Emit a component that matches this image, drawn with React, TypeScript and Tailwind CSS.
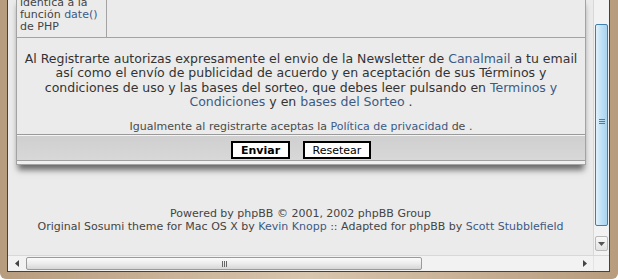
import React from "react";

// Fenêtre de navigateur (thème Sosumi phpBB), contenu défilé vers le bas
const font = { fontFamily: "Verdana, 'DejaVu Sans', sans-serif" };

function VScrollbar() {
    return (
        <div className="w-[16px] shrink-0 flex flex-col border-l border-[#d8d8d8] bg-[#f2f2f2]">
            <div className="h-[24px]" />
            {/* thumb */}
            <div className="mx-[1px] h-[202px] rounded-[2px] border border-[#3f7fae] bg-gradient-to-r from-[#e3f2fb] via-[#bfe0f5] to-[#a9d3ef] flex items-center justify-center">
                <div className="flex flex-col gap-[1px] mt-[-8px]">
                    <div className="w-[6px] h-[1px] bg-[#4a7da3]" />
                    <div className="w-[6px] h-[1px] bg-[#4a7da3]" />
                    <div className="w-[6px] h-[1px] bg-[#4a7da3]" />
                </div>
            </div>
            <div className="h-[10px]" />
            {/* down arrow */}
            <div className="mx-[1px] h-[15px] rounded-[2px] border border-[#b8b8b8] bg-gradient-to-b from-[#f8f8f8] to-[#e2e2e2] flex items-center justify-center">
                <svg width="7" height="4" viewBox="0 0 7 4">
                    <path d="M0 0h7L3.5 4z" fill="#555" />
                </svg>
            </div>
            <div className="flex-1" />
        </div>
    );
}

function HScrollbar() {
    return (
        <div className="h-[16px] shrink-0 flex border-t border-[#d8d8d8] bg-[#f2f2f2]">
            <div className="w-[18px] flex items-center justify-center">
                <svg width="4" height="7" viewBox="0 0 4 7">
                    <path d="M4 0v7L0 3.5z" fill="#444" />
                </svg>
            </div>
            <div className="w-[396px] my-[1px] rounded-[2px] border border-[#9a9a9a] bg-gradient-to-b from-[#fbfbfb] via-[#ececec] to-[#d6d6d6] flex items-center justify-center">
                <div className="flex gap-[1px]">
                    <div className="w-[1px] h-[6px] bg-[#666]" />
                    <div className="w-[1px] h-[6px] bg-[#666]" />
                    <div className="w-[1px] h-[6px] bg-[#666]" />
                </div>
            </div>
            <div className="flex-1 flex items-center justify-end pr-[6px]">
                <svg width="4" height="7" viewBox="0 0 4 7">
                    <path d="M0 0v7L4 3.5z" fill="#444" />
                </svg>
            </div>
            <div className="w-[16px] bg-[#f2f2f2] border-l border-[#e4e4e4]" />
        </div>
    );
}

function Page() {
    return (
        <div className="flex-1 overflow-hidden bg-[#ebebeb] text-[#333]" style={font}>
            <div className="mx-[8px] mr-[7px] mt-[-4px] border border-[#a3a3a3] bg-[#ebebeb] shadow-[0_7px_6px_-2px_rgba(0,0,0,0.55)]">
                {/* ligne du haut (cellule tronquée) */}
                <div className="flex border-b border-[#a3a3a3]">
                    <div className="w-[90px] border-r border-[#a3a3a3] pl-[3px] pb-[4px] text-[11px] leading-[12px] text-[#444]">
                        <div>idéntica a la</div>
                        <div>
                            función <span className="text-[#3b5a85]">date()</span>
                        </div>
                        <div>de PHP</div>
                    </div>
                    <div className="flex-1" />
                </div>

                {/* texte légal */}
                <div className="pt-[14px] pb-[1px] text-center border-b border-[#9a9a9a]">
                    <p className="text-[12.5px] leading-[14.3px] whitespace-nowrap">
                        Al Registrarte autorizas expresamente el envio de la Newsletter de{" "}
                        <span className="text-[#3b5a85]">Canalmail</span> a tu email
                        <br />
                        así como el envío de publicidad de acuerdo y en aceptación de sus Términos y
                        <br />
                        condiciones de uso y las bases del sorteo, que debes leer pulsando en{" "}
                        <span className="text-[#3b5a85]">
                            Terminos y
                            <br />
                            Condiciones
                        </span>{" "}
                        y en <span className="text-[#3b5a85]">bases del Sorteo</span> .
                    </p>
                    <p className="mt-[11px] text-[11px] leading-[13px] text-[#4a4a4a] whitespace-nowrap">
                        Igualmente al registrarte aceptas la{" "}
                        <span className="text-[#3b5a85]">Política de privacidad</span> de .
                    </p>
                </div>

                {/* boutons */}
                <div className="border-t border-[#f4f4f4] bg-gradient-to-b from-[#cfcfcf] to-[#d8d8d8] h-[25px] pt-[5px] flex items-start justify-center gap-[13px]">
                    <button className="w-[59px] h-[18px] border-2 border-black bg-white text-[11px] font-bold text-black leading-none">
                        Enviar
                    </button>
                    <button className="w-[68px] h-[18px] border-2 border-black bg-white text-[11px] text-black leading-none">
                        Resetear
                    </button>
                </div>
                <div className="border-t border-[#a0a0a0] h-[4px] bg-[#f0f0f0]" />
            </div>

            {/* pied de page */}
            <div className="mt-[43px] text-center text-[11px] leading-[12.5px] text-[#444] whitespace-nowrap">
                <div>Powered by phpBB © 2001, 2002 phpBB Group</div>
                <div>
                    Original Sosumi theme for Mac OS X by{" "}
                    <span className="text-[#3b5a85]">Kevin Knopp</span> :: Adapted for phpBB by{" "}
                    <span className="text-[#3b5a85]">Scott Stubblefield</span>
                </div>
            </div>
        </div>
    );
}

export default function App() {
    return (
        <div className="w-[618px] h-[279px] overflow-hidden bg-gradient-to-r from-[#b89c7e] via-[#d9c6ae] to-[#b89c7e] pl-[7px] pr-[8px] pb-[7px] rounded-b-[6px]">
            <div className="h-full flex flex-col border-l border-r border-b border-[#4e3f31] bg-white overflow-hidden">
                <div className="flex-1 flex min-h-0">
                    <Page />
                    <VScrollbar />
                </div>
                <HScrollbar />
            </div>
        </div>
    );
}
